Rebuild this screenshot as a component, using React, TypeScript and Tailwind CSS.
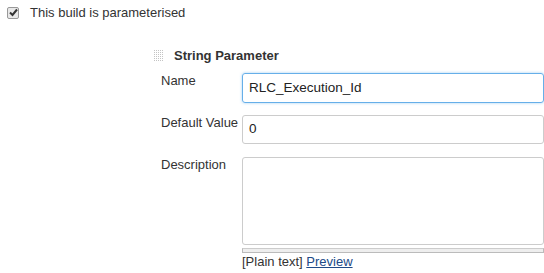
import React from "react";

function GridIcon() {
  const dots = [];
  for (let r = 0; r < 6; r++) {
    for (let c = 0; c < 5; c++) {
      dots.push(<rect key={`${r}-${c}`} x={c * 2} y={r * 2} width={1} height={1} fill="#c4c4c4" />);
    }
  }
  return (
    <svg width="10" height="12" viewBox="0 0 10 12">
      {dots}
    </svg>
  );
}

export default function App() {
  return (
    <div className="w-[544px] h-[273px] bg-white overflow-hidden text-[13px] text-[#333]" style={{ fontFamily: "Arial, 'Liberation Sans', sans-serif" }}>
      <div className="flex items-center h-[24px] pl-[7px] pt-[1px]">
        <span className="w-[12px] h-[12px] rounded-[2px] border border-[#999] bg-[#e8e8e8] flex items-center justify-center">
          <svg width="9" height="9" viewBox="0 0 9 9">
            <path d="M1 4.5 L3.5 7 L8 1.5" stroke="#333" strokeWidth="2" fill="none" />
          </svg>
        </span>
        <span className="ml-[11px]">This build is parameterised</span>
      </div>
      <div className="ml-[154px] mt-[20px]">
        <div className="flex items-center h-[24px]">
          <GridIcon />
          <span className="ml-[10px] font-bold">String Parameter</span>
        </div>
        <div className="flex mt-[5px]">
          <div className="w-[88px] pl-[7px] -mt-[2px]">Name</div>
          <div className="flex-1">
            <div className="h-[30px] border border-[#66afe9] rounded-[3px] shadow-[0_0_3px_rgba(102,175,233,0.6)] flex items-center pl-[6px] text-[13.5px] text-[#222]">
              RLC_Execution_Id
            </div>
          </div>
        </div>
        <div className="flex mt-[12px]">
          <div className="w-[88px] pl-[7px] -mt-[2px]">Default Value</div>
          <div className="flex-1">
            <div className="h-[29px] border border-[#ccc] rounded-[3px] flex items-center pl-[6px] text-[13.5px] text-[#222]">
              0
            </div>
          </div>
        </div>
        <div className="flex mt-[13px]">
          <div className="w-[88px] pl-[7px] -mt-[2px]">Description</div>
          <div className="flex-1">
            <div className="h-[88px] border border-[#ccc] rounded-[3px]" />
            <div className="mt-[3px] h-[5px] bg-[#eee] border border-[#bbb] border-t-[#ccc]" />
            <div className="leading-[17px]">
              [Plain text] <a href="#" className="text-[#204a87] underline">Preview</a>
            </div>
          </div>
        </div>
      </div>
    </div>
  );
}
